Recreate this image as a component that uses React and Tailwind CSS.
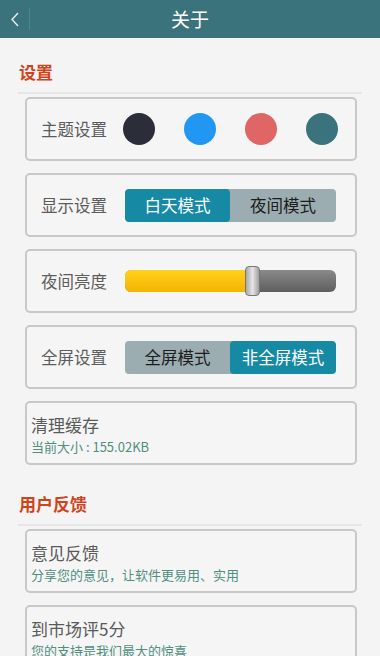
import React from 'react';

const font = { fontFamily: '"Noto Sans CJK SC", "Noto Sans", sans-serif' };

function Card({ children, className = '' }) {
  return (
    <div className={`ml-[25px] mr-[23px] rounded-[5px] border-2 border-[#c8c8c8] bg-[#f5f5f5] ${className}`}>
      {children}
    </div>
  );
}

function Row({ label, children }) {
  return (
    <Card className="h-[64px] flex items-center pl-[14px]">
      <span className="w-[84px] shrink-0 text-[16.5px] text-[#5c5c5c]">{label}</span>
      {children}
    </Card>
  );
}

function Segment({ left, right, active }) {
  return (
    <div className="flex w-[211px] h-[33px] rounded-[4px] overflow-hidden bg-[#9badb1] text-[16.5px]">
      <div className={`w-[105px] flex items-center justify-center ${active === 0 ? 'bg-[#168aa5] text-white rounded-[4px]' : 'text-[#1c1c1c]'}`}>
        {left}
      </div>
      <div className={`flex-1 flex items-center justify-center ${active === 1 ? 'bg-[#168aa5] text-white rounded-[4px]' : 'text-[#1c1c1c]'}`}>
        {right}
      </div>
    </div>
  );
}

function SectionTitle({ children, className = '' }) {
  return (
    <div className={className}>
      <div className="pl-[19px] text-[17px] font-bold text-[#d2421a] leading-none">{children}</div>
      <div className="mx-[18px] mt-[12px] h-[2px] bg-[#e6e6e6]" />
    </div>
  );
}

function InfoCard({ title, sub }) {
  return (
    <Card className="h-[64px] pl-[4px] pt-[11px]">
      <div className="text-[17px] leading-[22px] text-[#5a5a5a]">{title}</div>
      <div className="text-[13px] leading-[18px] mt-[2px] text-[#4f8f7f]">{sub}</div>
    </Card>
  );
}

export default function App() {
  const colors = ['#2b2e38', '#2196f3', '#e06666', '#3a737c'];
  return (
    <div style={font} className="w-[380px] h-[656px] overflow-hidden bg-[#f4f4f4]">
      <div className="h-[38px] bg-[#3a737c] relative flex items-center justify-center">
        <svg className="absolute left-[10px] top-[12px]" width="10" height="15" viewBox="0 0 10 15">
          <path d="M8 1 L2 7.5 L8 14" fill="none" stroke="#e8f0f1" strokeWidth="1.4" />
        </svg>
        <div className="absolute left-[29px] top-[8px] w-px h-[22px] bg-[#4f858d]" />
        <span className="text-white text-[19px]">关于</span>
      </div>

      <SectionTitle className="pt-[25px]">设置</SectionTitle>

      <div className="mt-[3px] flex flex-col gap-[12px]">
        <Row label="主题设置">
          <div className="flex gap-[29px] -ml-[2px]">
            {colors.map((c) => (
              <div key={c} className="w-[32px] h-[32px] rounded-full" style={{ backgroundColor: c }} />
            ))}
          </div>
        </Row>

        <Row label="显示设置">
          <Segment left="白天模式" right="夜间模式" active={0} />
        </Row>

        <Row label="夜间亮度">
          <div className="relative w-[211px] h-[22px] rounded-[6px] bg-gradient-to-b from-[#8a8a8a] to-[#5e5e5e]">
            <div className="absolute left-0 top-0 h-full w-[126px] rounded-l-[6px] bg-gradient-to-b from-[#ffd21a] to-[#f4b400]" />
            <div className="absolute left-[120px] -top-[4px] w-[15px] h-[30px] rounded-[4px] border border-[#777] bg-gradient-to-r from-[#a9a9a9] via-[#e6e6e6] to-[#a0a0a0]" />
          </div>
        </Row>

        <Row label="全屏设置">
          <Segment left="全屏模式" right="非全屏模式" active={1} />
        </Row>

        <InfoCard title="清理缓存" sub="当前大小 : 155.02KB" />
      </div>

      <SectionTitle className="pt-[30px]">用户反馈</SectionTitle>

      <div className="mt-[3px] flex flex-col gap-[12px]">
        <InfoCard title="意见反馈" sub="分享您的意见，让软件更易用、实用" />
        <InfoCard title="到市场评5分" sub="您的支持是我们最大的惊喜" />
      </div>
    </div>
  );
}
